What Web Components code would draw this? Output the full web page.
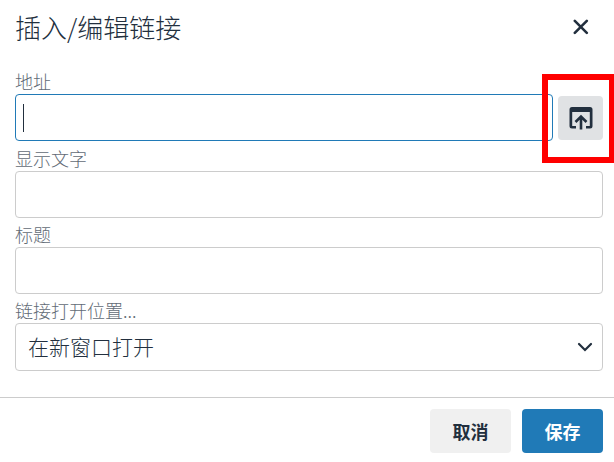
<!DOCTYPE html>
<html lang="zh-CN">
<head>
<meta charset="utf-8">
<title>插入/编辑链接</title>
<style>
body { margin: 0; background: #fff; color: #222f3e; font-family: "Noto Sans CJK SC", sans-serif; font-weight: 300; }
</style>
</head>
<body>
<link-dialog heading="插入/编辑链接">
  <text-field label="地址" active><browse-button slot="action"></browse-button></text-field>
  <text-field label="显示文字"></text-field>
  <text-field label="标题"></text-field>
  <select-field label="链接打开位置..." value="在新窗口打开"></select-field>
  <dialog-button slot="footer">取消</dialog-button>
  <dialog-button slot="footer" primary>保存</dialog-button>
</link-dialog>
<script>
class LinkDialog extends HTMLElement {
  connectedCallback() {
    this.attachShadow({ mode: 'open' }).innerHTML = `
      <style>
        :host { display: block; overflow: hidden; }
        header { display: flex; align-items: center; justify-content: space-between; padding: 7px 11px 7px 15px; }
        h1 { margin: 0; font-size: 26px; line-height: 40px; font-weight: 300; }
        button { display: grid; place-items: center; width: 44px; height: 40px; padding: 0; border: 0; background: none; color: inherit; }
        main { display: grid; gap: 5px; padding: 16px 11px 26px 15px; }
        footer { display: flex; justify-content: flex-end; gap: 11px; padding: 11px 11px 9px; border-top: 1px solid #ccc; }
      </style>
      <header>
        <h1></h1>
        <button type="button" aria-label="关闭">
          <svg width="16" height="16" viewBox="0 0 16 16" fill="none" stroke="currentColor" stroke-width="2.6" stroke-linecap="round"><path d="M1.800 1.800l12 12M13.800 1.800l-12 12"/></svg>
        </button>
      </header>
      <main><slot></slot></main>
      <footer><slot name="footer"></slot></footer>`;
    this.shadowRoot.querySelector('h1').textContent = this.getAttribute('heading');
  }
}

const fieldStyles = `
  :host { display: block; }
  label { display: block; padding-bottom: 2px; font-size: 18px; line-height: 22px; color: #626b76; }
  input, select { display: block; box-sizing: border-box; width: 100%; height: 47px; margin: 0; padding: 0 12px; border: 1px solid #ccc; border-radius: 4px; background: #fff; color: inherit; font: inherit; font-size: 21px; outline: 0; }
`;

class TextField extends HTMLElement {
  connectedCallback() {
    this.attachShadow({ mode: 'open' }).innerHTML = `
      <style>${fieldStyles}
        .row { display: flex; gap: 5px; }
        .box { position: relative; flex: 1; }
        .caret { display: none; position: absolute; left: 8px; top: 10px; bottom: 9px; width: 1px; background: #222f3e; }
        :host([active]) .row { padding-bottom: 1px; }
        :host([active]) input { border-color: #207ab7; caret-color: transparent; }
        :host([active]) .caret { display: block; }
      </style>
      <label for="field"></label>
      <div class="row">
        <div class="box"><input id="field" type="text"><span class="caret"></span></div>
        <slot name="action"></slot>
      </div>`;
    this.shadowRoot.querySelector('label').textContent = this.getAttribute('label');
  }
}

class SelectField extends HTMLElement {
  connectedCallback() {
    this.attachShadow({ mode: 'open' }).innerHTML = `
      <style>${fieldStyles}
        .box { position: relative; }
        select { appearance: none; height: 48px; padding: 0 12px 2px; }
        svg { position: absolute; right: 10px; top: 19px; pointer-events: none; }
      </style>
      <label for="field"></label>
      <div class="box">
        <select id="field"><option></option></select>
        <svg width="16" height="10" viewBox="0 0 16 10" fill="none" stroke="currentColor" stroke-width="2.2" stroke-linecap="round"><path d="M2 2l6 6 6-6"/></svg>
      </div>`;
    this.shadowRoot.querySelector('label').textContent = this.getAttribute('label');
    this.shadowRoot.querySelector('option').textContent = this.getAttribute('value');
  }
}

class BrowseButton extends HTMLElement {
  connectedCallback() {
    this.attachShadow({ mode: 'open' }).innerHTML = `
      <style>
        :host { display: block; position: relative; padding-top: 2px; }
        button { display: grid; place-items: center; width: 45px; height: 44px; padding: 0; border: 0; border-radius: 4px; background: #e0e2e4; color: #222f3e; }
        .highlight { position: absolute; inset: -20px -11px -22px -16px; border: 6px solid #f00; border-right-width: 5px; pointer-events: none; }
      </style>
      <button type="button" aria-label="浏览">
        <svg width="24" height="24" viewBox="0 0 24 24" fill="currentColor"><path d="M3 1h18a2.500 2.500 0 0 1 2.500 2.500v16.500a2.500 2.500 0 0 1-2.500 2.500h-4V20h3.800V6H3.200v14H7v2.500H3a2.500 2.500 0 0 1-2.500-2.500V3.500A2.500 2.500 0 0 1 3 1z"/><path d="M12 23.500V11M6.500 16L12 10.500l5.500 5.500" fill="none" stroke="currentColor" stroke-width="2.600"/></svg>
      </button>
      <span class="highlight"></span>`;
  }
}

class DialogButton extends HTMLElement {
  connectedCallback() {
    this.attachShadow({ mode: 'open' }).innerHTML = `
      <style>
        :host { display: block; }
        button { min-width: 81px; height: 44px; padding: 0 20px; border: 0; border-radius: 4px; background: #f0f0f0; color: #222f3e; font: inherit; font-size: 18px; font-weight: 700; }
        :host([primary]) button { background: #207ab7; color: #fff; }
      </style>
      <button type="button"><slot></slot></button>`;
  }
}

customElements.define('link-dialog', LinkDialog);
customElements.define('text-field', TextField);
customElements.define('select-field', SelectField);
customElements.define('browse-button', BrowseButton);
customElements.define('dialog-button', DialogButton);
</script>
</body>
</html>
